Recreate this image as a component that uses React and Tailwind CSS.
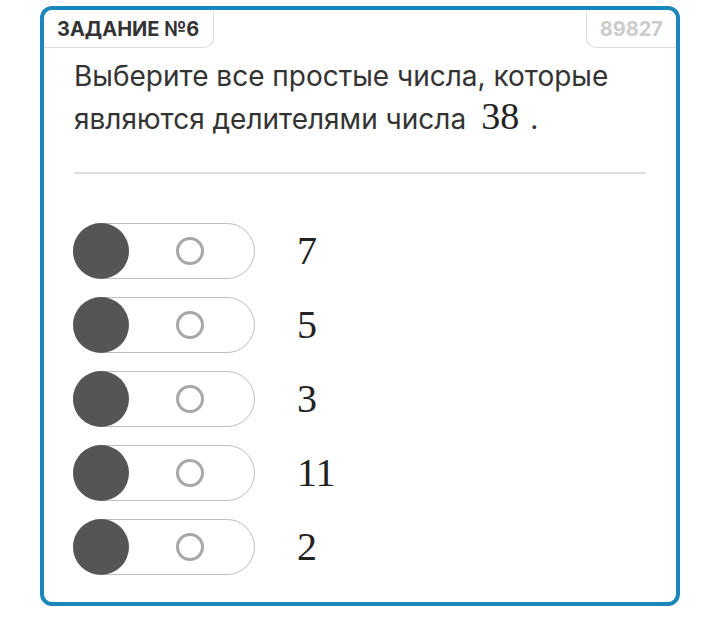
import { useState } from "react";

const options = ["7", "5", "3", "11", "2"];

const Toggle = ({ on, onClick }) => (
  <button
    onClick={onClick}
    className="flex h-[56px] w-[182px] shrink-0 items-center rounded-full border border-[#bdbdbd] bg-white"
  >
    <span className="-ml-px h-[56px] w-[56px] shrink-0 rounded-full bg-[#555555]" />
    <span className="flex flex-1 items-center justify-center pr-[4px]">
      <span className="h-[28px] w-[28px] rounded-full border-[3px] border-[#a8a8a8]" />
    </span>
  </button>
);

export default function App() {
  const [checked, setChecked] = useState({});

  return (
    <div className="min-h-[624px] bg-white pl-[40px] pt-[6px]">
      <div className="h-[600px] w-[640px] rounded-[12px] border-4 border-[#1b86ba] bg-white">
        <div className="flex items-start justify-between">
          <div
            className="flex h-[38px] items-center rounded-br-[10px] border-b border-r border-[#dddddd] pl-[13px] pr-[14px] text-[20px] font-bold text-[#333333]"
            style={{ fontFamily: "Inter, 'Liberation Sans', sans-serif" }}
          >
            ЗАДАНИЕ №6
          </div>
          <div
            className="flex h-[38px] items-center rounded-bl-[10px] border-b border-l border-[#dddddd] px-[13px] text-[20px] font-bold text-[#cccccc]"
            style={{ fontFamily: "Inter, 'Liberation Sans', sans-serif" }}
          >
            89827
          </div>
        </div>

        <div className="px-[30px]">
          <p
            className="mt-[8px] text-[28px] leading-[41px] text-[#333333]"
            style={{ fontFamily: "Inter, 'Liberation Sans', sans-serif" }}
          >
            Выберите все простые числа, которые являются делителями числа
            <span
              className="ml-[15px] mr-[11px] inline-block text-[38px] leading-none text-[#222222]"
              style={{ fontFamily: "'Liberation Serif', serif" }}
            >
              38
            </span>
            .
          </p>

          <div className="mt-[32px] h-[2px] bg-[#dddddd]" />

          <div className="mt-[49px] flex flex-col gap-[18px]">
            {options.map((opt, i) => (
              <div key={opt} className="-ml-px flex items-center gap-[42px]">
                <Toggle
                  on={!!checked[i]}
                  onClick={() => setChecked({ ...checked, [i]: !checked[i] })}
                />
                <span
                  className="text-[40px] leading-none text-[#222222]"
                  style={{ fontFamily: "'Liberation Serif', serif" }}
                >
                  {opt}
                </span>
              </div>
            ))}
          </div>
        </div>
      </div>
    </div>
  );
}
